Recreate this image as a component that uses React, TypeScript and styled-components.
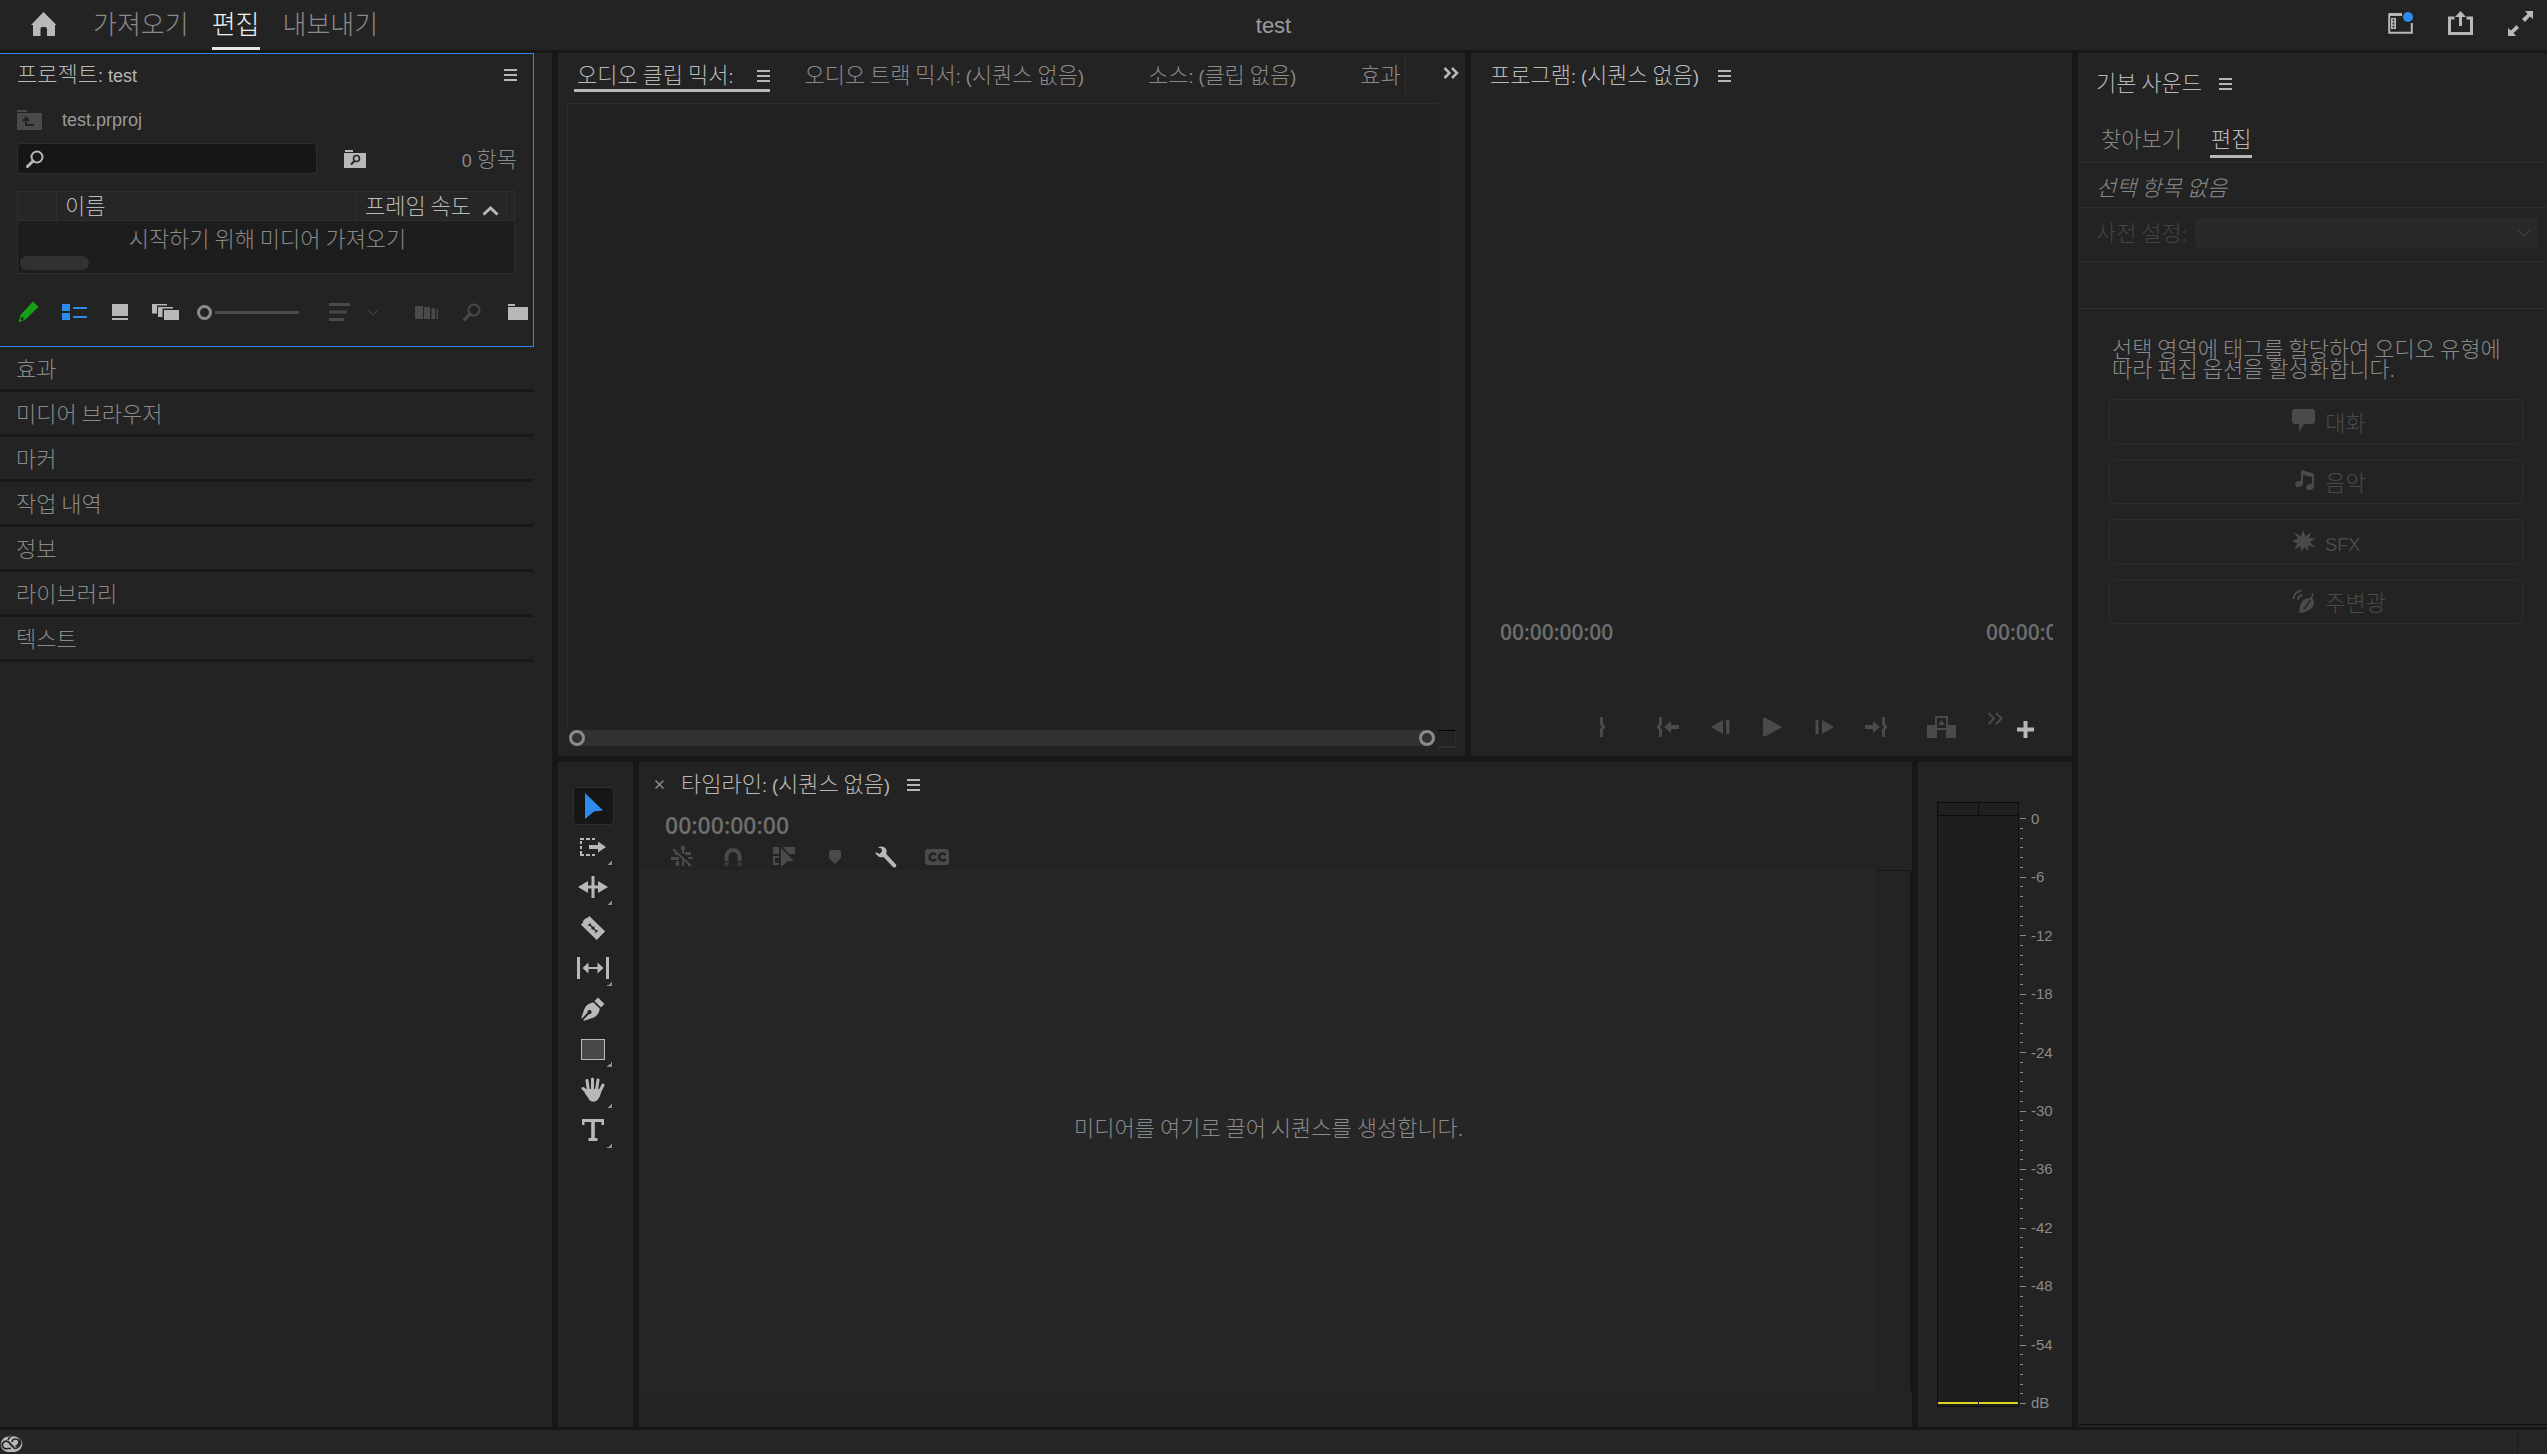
import React from 'react';
import styled, { createGlobalStyle } from 'styled-components';

const c = {
  panel: '#232323',
  gutter: '#171717',
  line: '#2f2f2f',
  bright: '#b8b8b8',
  mid: '#8a8a8a',
  dim: '#4a4a4a',
  blue: '#2d8ceb',
};

const Global = createGlobalStyle`
  *, *::before, *::after { box-sizing: border-box; }
  body {
    margin: 0;
    background: ${c.gutter};
    color: ${c.bright};
    font-family: "Noto Sans CJK KR", sans-serif;
    font-size: 22px;
    font-weight: 300;
    line-height: 28px;
  }
  button {
    margin: 0;
    padding: 0;
    border: 0;
    background: none;
    color: inherit;
    font: inherit;
    line-height: inherit;
    text-align: left;
    white-space: nowrap;
  }
  svg { display: block; flex: none; }
`;

/* ---------- shared ---------- */

const Latin = styled.span`
  font-family: "Liberation Sans", Arial, sans-serif;
  font-size: 18px;
  font-weight: 400;
  line-height: 1;
`;

/* Hangul keeps the surrounding size, Latin letters and punctuation are set smaller. */
const Text = ({ children }: { children: string }) => (
  <span>
    {children.split(/([\x21-\x7e]+(?: [\x21-\x7e]+)*(?: (?=\())?)/).map((part, i) =>
      i % 2 ? <Latin key={i}>{part}</Latin> : part,
    )}
  </span>
);

const Panel = styled.section`
  display: flex;
  flex-direction: column;
  min-width: 0;
  min-height: 0;
  overflow: hidden;
  background: ${c.panel};
`;

const IconButton = styled.button<{ $w?: number; $color?: string }>`
  display: flex;
  align-items: center;
  justify-content: center;
  flex: none;
  width: ${(p) => p.$w ?? 30}px;
  height: 26px;
  color: ${(p) => p.$color ?? c.bright};
`;

const MenuButton = styled.button`
  display: flex;
  flex: none;
  padding-top: 5px;
  color: ${c.bright};
`;

const Menu = () => (
  <MenuButton aria-label="패널 메뉴">
    <svg width="13" height="12" viewBox="0 0 13 12" fill="currentColor">
      <rect y="0" width="13" height="2" />
      <rect y="5" width="13" height="2" />
      <rect y="10" width="13" height="2" />
    </svg>
  </MenuButton>
);

const Svg = ({ w, h, children }: { w: number; h: number; children: React.ReactNode }) => (
  <svg width={w} height={h} viewBox={`0 0 ${w} ${h}`} fill="currentColor" aria-hidden="true">
    {children}
  </svg>
);

const SearchIcon = () => (
  <Svg w={18} h={18}>
    <circle cx="11" cy="7" r="5.5" fill="none" stroke="currentColor" strokeWidth="2" />
    <path d="M7 11 L1.5 16.5" stroke="currentColor" strokeWidth="3" strokeLinecap="round" />
  </Svg>
);

/* ---------- top bar ---------- */

const Shell = styled.div`
  display: flex;
  flex-direction: column;
  height: 100vh;
  overflow: hidden;
`;

const TopBar = styled.header`
  display: grid;
  grid-template-columns: 1fr auto 1fr;
  flex: none;
  height: 50px;
  background: ${c.panel};
`;

const TopLeft = styled.div`
  display: flex;
  padding-left: 31px;
`;

const HomeButton = styled.button`
  padding-bottom: 2px;
  color: ${c.bright};
`;

const Nav = styled.nav`
  display: flex;
  gap: 23px;
  margin-left: 36px;
`;

const NavTab = styled.button<{ $on?: boolean }>`
  height: 50px;
  padding-bottom: 1px;
  border-bottom: 3px solid ${(p) => (p.$on ? '#e6e6e6' : 'transparent')};
  color: ${(p) => (p.$on ? '#f0f0f0' : c.mid)};
  font-size: 26px;
`;

const DocTitle = styled.h1`
  margin: 0;
  padding-top: 12px;
  color: #9a9a9a;
  font: 400 22px/28px "Liberation Sans", Arial, sans-serif;
`;

const TopRight = styled.div`
  display: flex;
  align-items: center;
  justify-content: flex-end;
  gap: 35px;
  padding: 0 14px 4px 0;
`;

/* ---------- workspace ---------- */

const Workspace = styled.main`
  display: grid;
  flex: 1;
  grid-template-columns: 552px minmax(0, 1fr) 469px;
  gap: 6px;
  min-height: 0;
  padding: 3px 0;
`;

const Center = styled.div`
  display: grid;
  grid-template-rows: 703fr 665fr;
  gap: 6px;
  min-width: 0;
  min-height: 0;
`;

const UpperRow = styled.div`
  display: grid;
  grid-template-columns: 907fr 601fr;
  gap: 6px;
  min-height: 0;
`;

const LowerRow = styled.div`
  display: grid;
  grid-template-columns: 75px minmax(0, 1fr) 154px;
  gap: 6px;
  min-height: 0;
`;

/* ---------- project panel ---------- */

const Project = styled.div`
  width: 534px;
  padding: 4px 0 21px;
  border: 1px solid ${c.blue};
  border-left: 0;
`;

const ProjectHead = styled.div`
  display: flex;
  align-items: center;
  justify-content: space-between;
  padding: 0 16px 0 17px;
`;

const Crumb = styled.div`
  display: flex;
  align-items: center;
  gap: 20px;
  height: 26px;
  margin-top: 21px;
  padding-left: 17px;
  color: #9a9a9a;
`;

const SearchRow = styled.div`
  display: flex;
  height: 31px;
  margin-top: 10px;
  padding: 0 16px 0 17px;
`;

const SearchBox = styled.label`
  display: flex;
  align-items: center;
  width: 300px;
  padding-left: 8px;
  border: 1px solid ${c.line};
  border-radius: 4px;
  background: #161616;
`;

const SearchInput = styled.input`
  flex: 1;
  min-width: 0;
  margin-left: 8px;
  border: 0;
  outline: 0;
  background: transparent;
  color: ${c.bright};
  font: 18px "Liberation Sans", Arial, sans-serif;
`;

const ItemCount = styled.span`
  margin-left: auto;
  color: ${c.mid};
`;

const FolderSearch = styled(IconButton)`
  margin-left: 23px;
  height: 31px;
`;

const BinBox = styled.div`
  width: 498px;
  margin: 17px 0 0 17px;
  border: 1px solid ${c.line};
  background: #1d1d1d;
`;

const BinTable = styled.table`
  width: 100%;
  border-collapse: separate;
  border-spacing: 0;
  table-layout: fixed;
`;

const Th = styled.th`
  height: 29px;
  padding: 0 0 0 8px;
  border-bottom: 1px solid ${c.line};
  border-right: 1px solid ${c.line};
  background: #262626;
  font-weight: 300;
  line-height: 24px;
  text-align: left;
  vertical-align: top;
  white-space: nowrap;
  &:last-child { border-right: 0; padding: 0; }
`;

const SortHead = styled.span`
  display: flex;
  align-items: flex-end;
  justify-content: space-between;
  padding-right: 7px;
`;

const Td = styled.td`
  height: 34px;
  padding: 2px 0 4px 3px;
  color: ${c.mid};
  text-align: center;
`;

const BinScroll = styled.div`
  width: 69px;
  height: 14px;
  margin: 1px 2px 3px;
  border-radius: 7px;
  background: #313131;
`;

const ProjectTools = styled.div`
  display: flex;
  align-items: center;
  margin-top: 25px;
  padding-left: 13px;
`;

const ToolGroup = styled.div<{ $gap: number }>`
  display: flex;
  gap: ${(p) => p.$gap}px;
  & + & { margin-left: 23px; }
`;

const ZoomSlider = styled.input`
  width: 102px;
  height: 16px;
  margin: 0 25px 0 16px;
  appearance: none;
  background: linear-gradient(to right, transparent 18px, #4a4a4a 18px) center / 100% 3px no-repeat;
  &::-webkit-slider-thumb {
    appearance: none;
    width: 15px;
    height: 15px;
    border: 3px solid ${c.mid};
    border-radius: 50%;
    background: ${c.panel};
  }
`;

const Collapsed = styled.button`
  width: 533px;
  padding: 6px 0 8px 16px;
  border-bottom: 3px solid ${c.gutter};
  color: ${c.mid};
`;

/* ---------- source panel ---------- */

const SourceHead = styled.div`
  display: flex;
  height: 50px;
`;

const SourceTabs = styled.div`
  display: flex;
  flex: 1;
  gap: 30px;
  min-width: 0;
  height: 38px;
  margin-top: 3px;
  padding: 3px 0 0 16px;
  overflow: hidden;
  border-right: 1px solid ${c.line};
`;

const SourceTab = styled.button`
  flex: none;
  height: 28px;
  padding: 0 30px 0 4px;
  color: ${c.mid};
`;

const ActiveTab = styled.div`
  display: flex;
  flex: none;
  align-items: center;
  gap: 24px;
  height: 33px;
  padding: 0 0 2px 3px;
  border-bottom: 3px solid ${c.bright};
`;

const ActiveName = styled.button`
  color: ${c.bright};
`;

const Overflow = styled.button`
  display: flex;
  justify-content: flex-end;
  flex: none;
  width: 59px;
  padding: 14px 6px 0 0;
`;

const SourceFrame = styled.div`
  flex: 1;
  margin: 0 27px 0 9px;
  border-top: 1px solid ${c.line};
  border-left: 1px solid ${c.line};
  background: #212121;
`;

const SourceScroll = styled.div`
  display: flex;
  gap: 3px;
  height: 28px;
  padding: 2px 9px 0 11px;
`;

const ScrollTrack = styled.div`
  display: flex;
  flex: 1;
  justify-content: space-between;
  height: 16px;
  border-radius: 8px;
  background: #313131;
`;

const ScrollHandle = styled.span`
  width: 16px;
  height: 16px;
  border: 3px solid ${c.mid};
  border-radius: 50%;
`;

const ScrollCorner = styled.div`
  width: 18px;
  height: 18px;
  border: solid ${c.line};
  border-width: 1px 1px 2px 0;
  border-top-color: #000;
`;

/* ---------- program panel ---------- */

const PanelTitle = styled.div<{ $top: number; $left: number; $gap: number }>`
  display: flex;
  align-items: center;
  gap: ${(p) => p.$gap}px;
  padding: ${(p) => p.$top}px 0 0 ${(p) => p.$left}px;
`;

const Timecode = styled.span<{ $size: number }>`
  display: block;
  color: #6e6e6e;
  font: 600 ${(p) => p.$size}px/28px "Open Sans", "Noto Sans", sans-serif;
  white-space: nowrap;
`;

const ProgramFoot = styled.div`
  margin-top: auto;
`;

const TimeRow = styled.div`
  display: flex;
  justify-content: space-between;
  padding: 0 19px 0 29px;
`;

const Duration = styled.div`
  width: 67px;
  overflow: hidden;
`;

const Transport = styled.div`
  display: flex;
  align-items: center;
  justify-content: flex-end;
  gap: 13px;
  height: 40px;
  margin: 61px 0 9px;
  padding-right: 32px;
`;

const TransportGroup = styled.div`
  display: flex;
`;

const RaisedIcon = styled.span`
  padding-bottom: 18px;
`;

const LoweredIcon = styled.span`
  padding-top: 5px;
`;

/* ---------- tool strip ---------- */

const Tools = styled.div`
  display: grid;
  grid-template-rows: repeat(9, 1fr);
  justify-content: center;
  height: 365px;
  margin: 25px 5px 0 0;
`;

const Tool = styled.button<{ $on?: boolean }>`
  display: grid;
  place-items: center;
  width: 41px;
  height: 38px;
  border: 1px solid ${(p) => (p.$on ? c.line : 'transparent')};
  border-radius: 4px;
  background: ${(p) => (p.$on ? '#161616' : 'none')};
  color: ${(p) => (p.$on ? c.blue : c.bright)};
  & > * { grid-area: 1 / 1; }
`;

const Flyout = styled.span`
  place-self: end;
  width: 5px;
  height: 5px;
  margin-right: 1px;
  background: linear-gradient(135deg, transparent 50%, ${c.mid} 50%);
`;

/* ---------- timeline ---------- */

const TimelineTime = styled.div`
  margin: 15px 0 5px 26px;
`;

const TimelineTools = styled.div`
  display: flex;
  gap: 21px;
  padding-left: 28px;
`;

const TimelineMain = styled.div`
  display: flex;
  flex: 1;
  margin-bottom: 36px;
`;

const DropArea = styled.div`
  display: flex;
  flex: 1;
  align-items: center;
  justify-content: center;
  padding: 0 0 10px 22px;
  background: #262626;
  color: ${c.mid};
`;

const TrackEdge = styled.div`
  width: 36px;
  border: solid ${c.gutter};
  border-width: 1px 2px 0 0;
`;

/* ---------- meters ---------- */

const Meter = styled.div`
  display: flex;
  flex: 1;
  padding: 40px 0 20px 19px;
`;

const MeterBars = styled.div`
  display: grid;
  grid-template-columns: 1fr 1fr;
  grid-template-rows: 12px 1fr;
  row-gap: 1px;
  width: 82px;
  border: 1px solid #0c0c0c;
  background: #0c0c0c;
`;

const Clip = styled.div`
  background: #1f1f1f;
  & + & { border-left: 1px solid #0c0c0c; }
`;

const Level = styled.div`
  display: flex;
  align-items: flex-end;
  padding-bottom: 2px;
  background: #1e1e1e;
  &::after {
    content: "";
    flex: 1;
    height: 2px;
    background: #d8d41e;
  }
  & + &::after { margin-left: 1px; }
`;

const Ticks = styled.div`
  display: flex;
  flex-direction: column;
  justify-content: space-between;
  width: 6px;
  margin: 16px 0 3px 1px;
`;

const Tick = styled.span<{ $major: boolean }>`
  width: ${(p) => (p.$major ? 6 : 3)}px;
  height: 1px;
  background: ${c.mid};
`;

const Labels = styled.div`
  display: flex;
  flex-direction: column;
  justify-content: space-between;
  margin: 16px 0 4px 5px;
  color: ${c.mid};
  font: 400 15px/1px "Liberation Sans", Arial, sans-serif;
`;

/* ---------- essential sound ---------- */

const SoundTabs = styled.div`
  display: flex;
  gap: 27px;
  height: 49px;
  margin-top: 18px;
  padding: 0 0 0 22px;
`;

const SoundTab = styled.button<{ $on?: boolean }>`
  height: 37px;
  margin-top: 8px;
  padding: 0 1px 3px;
  border-bottom: 3px solid ${(p) => (p.$on ? c.bright : 'transparent')};
  color: ${(p) => (p.$on ? c.bright : c.mid)};
`;

const Strip = styled.div<{ $h: number; $pad?: string }>`
  display: flex;
  align-items: center;
  flex: none;
  height: ${(p) => p.$h}px;
  margin-left: 1px;
  padding: ${(p) => p.$pad ?? '0'};
  border-top: 1px solid ${c.line};
`;

const Selection = styled.em`
  color: ${c.mid};
`;

const PresetLabel = styled.label`
  color: #444;
`;

const SelectBox = styled.div`
  display: grid;
  flex: 1;
  align-items: center;
  margin: 5px 0 0 8px;
  & > * { grid-area: 1 / 1; }
  & > svg { justify-self: end; margin-right: 8px; color: #3c3c3c; pointer-events: none; }
`;

const Select = styled.select`
  width: 100%;
  height: 30px;
  appearance: none;
  border: 0;
  border-radius: 4px;
  background: #292929;
  color: ${c.mid};
`;

const SoundHint = styled.p`
  margin: 28px 20px 0 34px;
  color: ${c.mid};
  line-height: 20px;
  word-break: keep-all;
`;

const TypeList = styled.div`
  display: grid;
  gap: 15px;
  margin: 19px 24px 0 31px;
`;

const TypeButton = styled.button`
  display: flex;
  align-items: center;
  height: 45px;
  padding: 0 0 2px 44%;
  border: 1px solid #2d2d2d;
  border-radius: 4px;
  color: ${c.dim};
`;

const TypeIcon = styled.span`
  display: flex;
  width: 33px;
`;

const SoundEnd = styled.div`
  height: 1px;
  margin: auto 0 2px 1px;
  background: #101010;
`;

const StatusBar = styled.footer`
  display: flex;
  align-items: flex-end;
  flex: none;
  justify-content: space-between;
  height: 24px;
  background: #262626;
`;

const StatusGrip = styled.div`
  width: 30px;
  height: 24px;
  border-left: 1px solid #1d1d1d;
`;

/* ---------- data ---------- */

const tools: { label: string; fly?: boolean; icon: React.ReactNode }[] = [
  { label: '선택 도구', icon: <Svg w={20} h={26}><path d="M2 0 L20 17.5 L11 18.5 L2 26 Z" /></Svg> },
  {
    label: '트랙 선택 도구',
    fly: true,
    icon: (
      <Svg w={28} h={18}>
        <path d="M1 1 H16 M1 17 H16" fill="none" stroke="currentColor" strokeWidth="2" strokeDasharray="4 2" />
        <path d="M2 3 V16" fill="none" stroke="currentColor" strokeWidth="2" strokeDasharray="3 2" />
        <path d="M10 7 H19 V3.5 L27 9 L19 14.5 V11 H10 Z" />
      </Svg>
    ),
  },
  {
    label: '잔물결 편집 도구',
    fly: true,
    icon: (
      <Svg w={30} h={22}>
        <rect x="13.5" y="0" width="3" height="22" />
        <path d="M0 11 L10 5 V9.5 H20 V5 L30 11 L20 17 V12.5 H10 V17 Z" />
      </Svg>
    ),
  },
  {
    label: '자르기 도구',
    icon: (
      <Svg w={24} h={24}>
        <g transform="rotate(44 12 12)">
          <path d="M1 6 H23 V18 H1 V14.5 H0 V9.5 H1 Z" />
          <path d="M6.5 10 L8.5 11.3 H10.5 L12 10 L13.5 11.3 H15.5 L17.5 10 V14 L15.5 12.7 H13.5 L12 14 L10.5 12.7 H8.5 L6.5 14 Z" fill={c.panel} />
        </g>
      </Svg>
    ),
  },
  {
    label: '밀어넣기 도구',
    fly: true,
    icon: (
      <Svg w={32} h={22}>
        <rect x="0" width="3" height="22" />
        <rect x="29" width="3" height="22" />
        <path d="M5.5 11 L11.5 5.5 V10 H20.5 V5.5 L26.5 11 L20.5 16.5 V12 H11.5 V16.5 Z" />
      </Svg>
    ),
  },
  {
    label: '펜 도구',
    icon: (
      <Svg w={24} h={24}>
        <path d="M17 0.5 L23.5 7 L20 10.5 L13.5 4 Z" />
        <path d="M12.5 5.5 L18.8 11.8 C18 17 15 20.5 10 21.5 L3 23.8 L2.2 23 L8 17 A2 2 0 1 0 6.6 15.6 L1 21.5 L0.3 21 L3 13 C4.5 8.5 8 6 12.5 5.5 Z" />
      </Svg>
    ),
  },
  {
    label: '사각형 도구',
    fly: true,
    icon: <Svg w={24} h={21}><rect x="0.5" y="0.5" width="23" height="20" fill="#484848" stroke="currentColor" /></Svg>,
  },
  {
    label: '손 도구',
    fly: true,
    icon: (
      <Svg w={24} h={25}>
        <path
          d="M2 11.5 L7.5 16 M7.5 14 L6 3.5 M11.5 13 V2 M15.5 13 L17 3 M18.5 15 L22 8"
          fill="none" stroke="currentColor" strokeWidth="3" strokeLinecap="round"
        />
        <path d="M6 12 H18 L20.3 13 C20 18 18 21 16.5 23 C14 25.5 10 25 8.5 23 L3.5 15.5 Z" />
      </Svg>
    ),
  },
  {
    label: '문자 도구',
    fly: true,
    icon: <Svg w={22} h={22}><path d="M0 0 H22 V6 H19.5 V3 H12.8 V19 H15.5 V22 H6.5 V19 H9.2 V3 H2.5 V6 H0 Z" /></Svg>,
  },
];

const timelineTools: { label: string; on?: boolean; icon: React.ReactNode }[] = [
  {
    label: '시퀀스 삽입',
    icon: (
      <Svg w={22} h={22}>
        <path d="M10 0 H14 V4 H13 V8 H11 V4 H10 Z M14 6 H20 V9 H14 Z M17 11 H22 V13 H17 Z M0 11 H8 V14 H0 Z M4 6 H7 V9 H4 Z M5 15 H8 V20 H5 Z M11 14 H13 V20 H11 Z M17 17 H19 V20 H17 Z" />
        <path d="M2 3 L20 20" stroke="currentColor" strokeWidth="2" />
      </Svg>
    ),
  },
  {
    label: '스냅',
    icon: (
      <Svg w={18} h={18}>
        <path d="M2.5 13 V8.5 A6.5 6.5 0 0 1 15.5 8.5 V13" fill="none" stroke="currentColor" strokeWidth="4" />
        <path d="M.5 14 H4.5 V18 H.5 Z M13.5 14 H17.5 V18 H13.5 Z" opacity="0.6" />
      </Svg>
    ),
  },
  {
    label: '연결된 선택',
    icon: (
      <Svg w={22} h={20}>
        <path d="M0 0 H6 V7 H0 Z M10 0 H22 V7 H16 Z M8 1 L21 14 L14 14.5 L8 20 Z" />
        <path d="M6 10 H1 V17 H6" fill="none" stroke="currentColor" strokeWidth="2" />
      </Svg>
    ),
  },
  { label: '마커 추가', icon: <Svg w={12} h={14}><path d="M0 2 Q0 0 2 0 H10 Q12 0 12 2 V8 L6 14 L0 8 Z" /></Svg> },
  {
    label: '타임라인 표시 설정',
    on: true,
    icon: (
      <Svg w={22} h={22}>
        <path d="M3 1.5 C6 -0.5 10.5 0.5 11.5 4 C11.8 5.5 11.5 7 11.3 8 L21 18.5 Q22 20.5 20 21.5 Q19 21.8 18 21 L8.5 11 C5 12 1 10 0.5 6 L4.5 8 L7 5.5 L6.5 2.5 Z" />
      </Svg>
    ),
  },
  {
    label: '캡션 트랙 옵션',
    icon: (
      <Svg w={24} h={16}>
        <rect width="24" height="16" rx="3" />
        <path d="M11 6 A3.5 3.5 0 1 0 11 10 M20.5 6 A3.5 3.5 0 1 0 20.5 10" fill="none" stroke={c.panel} strokeWidth="2.5" />
      </Svg>
    ),
  },
];

const brace = 'M0 0 H3 V7 L5 9 V11 L3 13 V20 H0 V12 L2 10 L0 8 Z';

const transport: { label: string; icon: React.ReactNode }[] = [
  {
    label: '시작 표시로 이동',
    icon: (
      <Svg w={22} h={20}>
        <path transform="translate(5 0) scale(-1 1)" d={brace} />
        <path d="M7 10 L14 4 V8 H22 V12 H14 V16 Z" />
      </Svg>
    ),
  },
  { label: '이전 프레임', icon: <Svg w={19} h={14}><path d="M0 7 L12 0 V14 Z M15 0 H18.5 V14 H15 Z" /></Svg> },
  { label: '재생', icon: <Svg w={19} h={18}><path d="M0 0 H3 L19 9 L3 18 H0 Z" /></Svg> },
  { label: '다음 프레임', icon: <Svg w={19} h={14}><path d="M19 7 L7 0 V14 Z M0.5 0 H3.5 V14 H0.5 Z" /></Svg> },
  {
    label: '종료 표시로 이동',
    icon: (
      <Svg w={22} h={20}>
        <path transform="translate(17 0)" d={brace} />
        <path d="M15 10 L8 4 V8 H0 V12 H8 V16 Z" />
      </Svg>
    ),
  },
];

const soundTypes: { label: string; icon: React.ReactNode }[] = [
  {
    label: '대화',
    icon: <Svg w={23} h={23}><path d="M3 0 H20 Q23 0 23 3 V12 Q23 15 20 15 H12 L7 23 V15 H3 Q0 15 0 12 V3 Q0 0 3 0 Z" /></Svg>,
  },
  {
    label: '음악',
    icon: (
      <Svg w={23} h={21}>
        <path d="M9 1 Q9 0 10.5 0.3 L20 3 Q22 3.5 22 5 V16 H20 V7 L11 5 V13 H9 Z" />
        <ellipse cx="7" cy="14" rx="4" ry="3" transform="rotate(-20 7 14)" />
        <ellipse cx="18" cy="17" rx="4" ry="3" transform="rotate(-20 18 17)" />
      </Svg>
    ),
  },
  {
    label: 'SFX',
    icon: (
      <Svg w={24} h={22}>
        <path d="M11 0 L13.5 6.5 L19 2.5 L17 8 L24 8.5 L18 12 L23 17.5 L16 15.5 L16.5 21 L12.5 17 L9.5 22 L8.5 16 L2 20 L5.5 13.5 L0 11 L6 8.5 L2 2 L9 6.5 Z" />
      </Svg>
    ),
  },
  {
    label: '주변광',
    icon: (
      <Svg w={24} h={24}>
        <path d="M1.5 10 Q2 3 9.5 1.5 M6 11 Q6 7 10.5 6" fill="none" stroke="currentColor" strokeWidth="2" />
        <path d="M7.5 24 C6.5 14 12 8 18.5 9 L20.5 4 L21.5 4.5 L20.5 9.5 C25 16 19 23 7.5 24 Z" />
        <path d="M12 20 L18.5 11" stroke={c.panel} strokeWidth="1.5" />
      </Svg>
    ),
  },
];

const collapsed = ['효과', '미디어 브라우저', '마커', '작업 내역', '정보', '라이브러리', '텍스트'];
const dbLabels = ['0', '-6', '-12', '-18', '-24', '-30', '-36', '-42', '-48', '-54', 'dB'];

/* ---------- panels ---------- */

const Header = () => (
  <TopBar>
    <TopLeft>
      <HomeButton aria-label="홈">
        <Svg w={26} h={24}><path d="M12.5 0 L25.5 13 H24 V24 H16 V17 Q16 15 14 15 H11 Q9.5 15 9.5 17 V24 H2 V13 H0 Z" /></Svg>
      </HomeButton>
      <Nav>
        <NavTab>가져오기</NavTab>
        <NavTab $on>편집</NavTab>
        <NavTab>내보내기</NavTab>
      </Nav>
    </TopLeft>
    <DocTitle>test</DocTitle>
    <TopRight>
      <IconButton $w={25} aria-label="작업 영역">
        <Svg w={25} h={22}>
          <path d="M14 2.5 H1.2 V20.8 H23.8 V11" fill="none" stroke="currentColor" strokeWidth="2" />
          <path d="M1 1 H14 V4 H1 Z M3 6 H8 V17 H3 Z" />
          <path d="M4.7 7.2 H6.3 V9.2 H4.7 Z M4.7 10.5 H6.3 V12.5 H4.7 Z M4.7 13.8 H6.3 V15.8 H4.7 Z" fill={c.panel} />
          <circle cx="20" cy="5" r="5" fill={c.blue} />
        </Svg>
      </IconButton>
      <IconButton $w={25} aria-label="빠른 내보내기">
        <Svg w={25} h={24}>
          <path d="M6.5 7 H1.5 V22.5 H23.5 V7 H18.5" fill="none" stroke="currentColor" strokeWidth="3" />
          <path d="M12.5 0 L18 6 H14 V15 H11 V6 H7 Z" />
        </Svg>
      </IconButton>
      <IconButton $w={25} aria-label="전체 화면">
        <Svg w={25} h={25}>
          <path d="M17 0 H25 V8 L22 5.5 L17 11 L14 8 L19.5 3 Z M0 25 V17 L3 19.5 L8.5 14 L11 17 L5.5 22 L8 25 Z" />
        </Svg>
      </IconButton>
    </TopRight>
  </TopBar>
);

const LeftColumn = () => (
  <Panel>
    <Project>
      <ProjectHead>
        <Text>프로젝트: test</Text>
        <Menu />
      </ProjectHead>
      <Crumb>
        <Svg w={25} h={20}>
          <g fill="#4a4a4a"><rect width="10" height="2" /><rect y="3" width="25" height="17" /></g>
          <path d="M9 7 V15 H17 M6 11 L9 7.5 L12 11" fill="none" stroke={c.panel} strokeWidth="2" />
        </Svg>
        <Latin>test.prproj</Latin>
      </Crumb>
      <SearchRow>
        <SearchBox>
          <SearchIcon />
          <SearchInput aria-label="검색" />
        </SearchBox>
        <FolderSearch aria-label="검색 저장소 만들기">
          <Svg w={22} h={18}>
            <rect x="1" width="8" height="2" />
            <rect y="3" width="22" height="15" />
            <circle cx="12.5" cy="8.5" r="3" fill="none" stroke={c.panel} strokeWidth="1.5" />
            <path d="M10.5 11 L7 14.5" stroke={c.panel} strokeWidth="2" />
          </Svg>
        </FolderSearch>
        <ItemCount><Text>0 항목</Text></ItemCount>
      </SearchRow>
      <BinBox>
        <BinTable>
          <colgroup>
            <col style={{ width: 39 }} />
            <col />
            <col style={{ width: 150 }} />
            <col style={{ width: 7 }} />
          </colgroup>
          <thead>
            <tr>
              <Th />
              <Th>이름</Th>
              <Th>
                <SortHead>
                  프레임 속도
                  <Svg w={17} h={10}><path d="M1.5 8.5 L8.5 2 L15.5 8.5" fill="none" stroke="currentColor" strokeWidth="3" /></Svg>
                </SortHead>
              </Th>
              <Th />
            </tr>
          </thead>
          <tbody>
            <tr><Td colSpan={4}>시작하기 위해 미디어 가져오기</Td></tr>
          </tbody>
        </BinTable>
        <BinScroll />
      </BinBox>
      <ProjectTools>
        <ToolGroup $gap={16}>
          <IconButton $color="#16a016" aria-label="쓰기 가능">
            <Svg w={21} h={22}>
              <path d="M15 0.5 L20.5 6 L7.5 18.5 L0.5 21.5 L2.5 14 Z" />
              <path d="M3.5 15.5 L6.5 18 L3.2 19.5 L2.6 18.5 Z" fill={c.panel} />
            </Svg>
          </IconButton>
          <IconButton $color={c.blue} aria-label="목록 보기">
            <Svg w={25} h={16}><path d="M0 0 H8 V7 H0 Z M0 9 H8 V16 H0 Z M11 3 H25 V5 H11 Z M11 12 H25 V14 H11 Z" /></Svg>
          </IconButton>
          <IconButton aria-label="아이콘 보기">
            <Svg w={16} h={16}><path d="M0 0 H16 V12 H0 Z M0 14 H16 V16 H0 Z" /></Svg>
          </IconButton>
          <IconButton aria-label="자유형 보기">
            <Svg w={28} h={16}><path d="M0 0 H15 V1.5 H5 V9.5 H0 Z M6 3 H21 V4.5 H10.5 V13 H6 Z M12 6 H27 V16 H12 Z" /></Svg>
          </IconButton>
        </ToolGroup>
        <ZoomSlider type="range" min={0} max={100} defaultValue={0} aria-label="확대/축소" />
        <ToolGroup $gap={4}>
          <IconButton $color={c.dim} aria-label="아이콘 정렬">
            <Svg w={21} h={18}><path d="M0 0 H21 V3 H0 Z M0 7.5 H18 V10.5 H0 Z M0 15 H15 V18 H0 Z" /></Svg>
          </IconButton>
          <IconButton $color={c.dim} aria-label="정렬 옵션">
            <Svg w={12} h={7}><path d="M0.5 0.5 L6 6 L11.5 0.5" fill="none" stroke="currentColor" /></Svg>
          </IconButton>
        </ToolGroup>
        <ToolGroup $gap={16}>
          <IconButton $color={c.dim} aria-label="시퀀스에 자동화">
            <Svg w={23} h={13}><path d="M0 0 H8 V13 H0 Z M9 1 H15 V13 H9 Z M16.5 2 H20 V13 H16.5 Z M21.5 3 H23 V13 H21.5 Z" /></Svg>
          </IconButton>
          <IconButton $color={c.dim} aria-label="찾기"><SearchIcon /></IconButton>
          <IconButton aria-label="새 저장소">
            <Svg w={20} h={17}><rect width="7" height="2" /><rect y="3" width="20" height="13" /></Svg>
          </IconButton>
        </ToolGroup>
      </ProjectTools>
    </Project>
    {collapsed.map((name) => <Collapsed key={name}>{name}</Collapsed>)}
  </Panel>
);

const SourcePanel = () => (
  <Panel>
    <SourceHead>
      <SourceTabs>
        <ActiveTab>
          <ActiveName><Text>오디오 클립 믹서:</Text></ActiveName>
          <Menu />
        </ActiveTab>
        <SourceTab><Text>오디오 트랙 믹서: (시퀀스 없음)</Text></SourceTab>
        <SourceTab><Text>소스: (클립 없음)</Text></SourceTab>
        <SourceTab>효과</SourceTab>
      </SourceTabs>
      <Overflow aria-label="더 보기">
        <Svg w={16} h={12}><path d="M1.5 1 L6.5 6 L1.5 11 M9 1 L14 6 L9 11" fill="none" stroke="currentColor" strokeWidth="2.5" /></Svg>
      </Overflow>
    </SourceHead>
    <SourceFrame />
    <SourceScroll>
      <ScrollTrack><ScrollHandle /><ScrollHandle /></ScrollTrack>
      <ScrollCorner />
    </SourceScroll>
  </Panel>
);

const ProgramPanel = () => (
  <Panel>
    <PanelTitle $top={6} $left={19} $gap={19}>
      <Text>프로그램: (시퀀스 없음)</Text>
      <Menu />
    </PanelTitle>
    <ProgramFoot>
      <TimeRow>
        <Timecode $size={21}>00:00:00:00</Timecode>
        <Duration><Timecode $size={21}>00:00:00:00</Timecode></Duration>
      </TimeRow>
      <Transport>
        <IconButton $w={52} $color={c.dim} aria-label="종료 표시">
          <Svg w={6} h={20}><path d={brace} /></Svg>
        </IconButton>
        <TransportGroup>
          {transport.map((t) => (
            <IconButton key={t.label} $w={52} $color={c.dim} aria-label={t.label}>{t.icon}</IconButton>
          ))}
        </TransportGroup>
        <IconButton $w={52} $color={c.dim} aria-label="프레임 내보내기">
          <Svg w={29} h={22}>
            <path d="M0 9 H8 V14 H10 V22 H0 Z M29 9 H21 V14 H19 V22 H29 Z" />
            <rect x="9" y="1" width="11" height="12" fill="none" stroke="currentColor" strokeWidth="2" />
            <path d="M14.5 4 L18 9 H11 Z" />
          </Svg>
        </IconButton>
        <TransportGroup>
          <IconButton $color={c.dim} aria-label="추가 단추">
            <RaisedIcon>
              <Svg w={16} h={13}><path d="M1.5 1 L7 6.5 L1.5 12 M9 1 L14.5 6.5 L9 12" fill="none" stroke="currentColor" strokeWidth="2" /></Svg>
            </RaisedIcon>
          </IconButton>
          <IconButton aria-label="단추 편집기">
            <LoweredIcon>
              <Svg w={17} h={17}><path d="M6.5 0 H10.5 V6.5 H17 V10.5 H10.5 V17 H6.5 V10.5 H0 V6.5 H6.5 Z" /></Svg>
            </LoweredIcon>
          </IconButton>
        </TransportGroup>
      </Transport>
    </ProgramFoot>
  </Panel>
);

const Timeline = () => (
  <Panel>
    <PanelTitle $top={6} $left={16} $gap={17}>
      <MenuButton aria-label="닫기">
        <Svg w={9} h={9}><path d="M0.5 0.5 L8.5 8.5 M8.5 0.5 L0.5 8.5" stroke={c.mid} strokeWidth="1.5" /></Svg>
      </MenuButton>
      <Text>타임라인: (시퀀스 없음)</Text>
      <Menu />
    </PanelTitle>
    <TimelineTime><Timecode $size={23}>00:00:00:00</Timecode></TimelineTime>
    <TimelineTools>
      {timelineTools.map((t) => (
        <IconButton key={t.label} $color={t.on ? c.bright : c.dim} aria-label={t.label}>{t.icon}</IconButton>
      ))}
    </TimelineTools>
    <TimelineMain>
      <DropArea><Text>미디어를 여기로 끌어 시퀀스를 생성합니다.</Text></DropArea>
      <TrackEdge />
    </TimelineMain>
  </Panel>
);

const Meters = () => (
  <Panel>
    <Meter>
      <MeterBars><Clip /><Clip /><Level /><Level /></MeterBars>
      <Ticks>{Array.from({ length: 61 }, (_, i) => <Tick key={i} $major={i % 6 === 0} />)}</Ticks>
      <Labels>{dbLabels.map((l) => <span key={l}>{l}</span>)}</Labels>
    </Meter>
  </Panel>
);

const SoundPanel = () => (
  <Panel>
    <PanelTitle $top={14} $left={18} $gap={17}>
      <span>기본 사운드</span>
      <Menu />
    </PanelTitle>
    <SoundTabs>
      <SoundTab>찾아보기</SoundTab>
      <SoundTab $on>편집</SoundTab>
    </SoundTabs>
    <Strip $h={45} $pad="2px 9px 0 17px"><Selection>선택 항목 없음</Selection></Strip>
    <Strip $h={54} $pad="0 9px 8px 17px">
      <PresetLabel htmlFor="preset"><Text>사전 설정:</Text></PresetLabel>
      <SelectBox>
        <Select id="preset"><option value="" /></Select>
        <Svg w={12} h={7}><path d="M0.5 0.5 L6 6 L11.5 0.5" fill="none" stroke="currentColor" strokeWidth="1.5" /></Svg>
      </SelectBox>
    </Strip>
    <Strip $h={47} />
    <Strip $h={1} />
    <SoundHint><Text>선택 영역에 태그를 할당하여 오디오 유형에 따라 편집 옵션을 활성화합니다.</Text></SoundHint>
    <TypeList>
      {soundTypes.map((t) => (
        <TypeButton key={t.label}>
          <TypeIcon>{t.icon}</TypeIcon>
          <Text>{t.label}</Text>
        </TypeButton>
      ))}
    </TypeList>
    <SoundEnd />
  </Panel>
);

export default function App() {
  return (
    <Shell>
      <Global />
      <Header />
      <Workspace>
        <LeftColumn />
        <Center>
          <UpperRow>
            <SourcePanel />
            <ProgramPanel />
          </UpperRow>
          <LowerRow>
            <Panel>
              <Tools>
                {tools.map((t, i) => (
                  <Tool key={t.label} $on={i === 0} aria-label={t.label}>
                    {t.icon}
                    {t.fly && <Flyout />}
                  </Tool>
                ))}
              </Tools>
            </Panel>
            <Timeline />
            <Meters />
          </LowerRow>
        </Center>
        <SoundPanel />
      </Workspace>
      <StatusBar>
        <Svg w={24} h={20}>
          <path d="M9 2.5 A8.5 8.5 0 1 1 14.5 18 H8 A7 7 0 1 1 9 2.5 Z" fill={c.bright} />
          <path d="M14 13.5 L8.5 8 A3.8 3.8 0 1 0 7.5 14.5 H11 M8 6 A6.5 6.5 0 1 1 14.5 14.5 L9.5 9.5 M12 8 A3.5 3.5 0 1 1 15.5 12" fill="none" stroke="#262626" strokeWidth="1.7" />
        </Svg>
        <StatusGrip />
      </StatusBar>
    </Shell>
  );
}
